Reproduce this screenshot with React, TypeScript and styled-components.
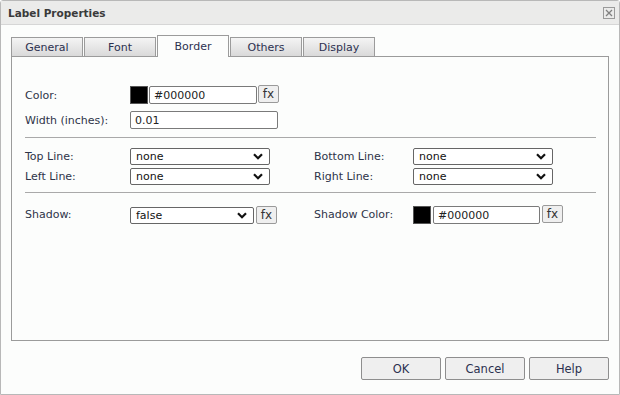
import React from 'react'
import styled, { createGlobalStyle } from 'styled-components'

const GlobalStyle = createGlobalStyle`
  html, body {
    margin: 0;
    padding: 0;
    background: #ffffff;
  }
  body {
    font-family: 'DejaVu Sans', Verdana, sans-serif;
    font-size: 11px;
    color: #333;
  }
`

const Dialog = styled.div`
  box-sizing: border-box;
  width: 620px;
  height: 395px;
  border: 1px solid #b8b8b8;
  border-radius: 3px 3px 0 0;
  background: #fcfdfc;
  display: flex;
  flex-direction: column;
`

const TitleBar = styled.div`
  box-sizing: border-box;
  height: 24px;
  background: #ebebea;
  border-bottom: 1px solid #d6d6d6;
  display: flex;
  align-items: center;
  justify-content: space-between;
  padding: 0 4px 0 7px;
`

const Title = styled.span`
  font-weight: bold;
  font-size: 10.5px;
  color: #3a3a3a;
`

const CloseBox = styled.div`
  box-sizing: border-box;
  width: 12px;
  height: 12px;
  border: 1px solid #9a9a9a;
  display: flex;
  align-items: center;
  justify-content: center;
  margin-top: 1px;
`

const Body = styled.div`
  padding: 10px 10px 0 10px;
  display: flex;
  flex-direction: column;
`

const TabRow = styled.div`
  display: flex;
  align-items: flex-end;
  gap: 1px;
  height: 21px;
`

const Tab = styled.div<{ $active?: boolean }>`
  box-sizing: border-box;
  width: 72px;
  height: ${p => (p.$active ? '22px' : '19px')};
  margin-bottom: ${p => (p.$active ? '-1px' : '0')};
  border: 1px solid #9b9b9b;
  border-bottom: none;
  background: ${p => (p.$active ? '#fcfdfc' : 'linear-gradient(#f4f4f4, #d9d9d9)')};
  position: relative;
  z-index: 1;
  display: flex;
  align-items: center;
  justify-content: center;
  color: #2c3150;
  padding-top: ${p => (p.$active ? '0' : '1px')};
`

const Panel = styled.div`
  box-sizing: border-box;
  height: 285px;
  border: 1px solid #9b9b9b;
  padding: 29px 12px 0 13px;
`

const Row = styled.div<{ $mt?: number }>`
  display: flex;
  align-items: center;
  height: 18px;
  margin-top: ${p => p.$mt ?? 0}px;
`

const Label = styled.span<{ $w?: number }>`
  width: ${p => p.$w ?? 105}px;
  flex: none;
  color: #2e3448;
  white-space: nowrap;
`

const Swatch = styled.div<{ $mt?: number }>`
  box-sizing: border-box;
  width: 18px;
  height: 18px;
  border: 1px solid #555;
  background: #000;
  flex: none;
  margin-top: ${p => p.$mt ?? 0}px;
`

const TextInput = styled.div<{ $w: number; $mt?: number }>`
  box-sizing: border-box;
  width: ${p => p.$w}px;
  height: 18px;
  border: 1px solid #7a7a7a;
  border-radius: 2px;
  background: #fff;
  padding-left: 4px;
  display: flex;
  align-items: center;
  color: #222;
  flex: none;
  margin-top: ${p => p.$mt ?? 0}px;
`

const FxButton = styled.div<{ $mt?: number }>`
  box-sizing: border-box;
  width: 21px;
  height: 18px;
  border: 1px solid #9a9a9a;
  border-radius: 2px;
  background: #efefef;
  display: flex;
  align-items: center;
  justify-content: center;
  font-size: 12px;
  color: #333;
  margin-top: ${p => p.$mt ?? -2}px;
  flex: none;
`

const SelectBox = styled.div<{ $w: number; $mt?: number }>`
  box-sizing: border-box;
  width: ${p => p.$w}px;
  height: 17px;
  border: 1px solid #666;
  border-radius: 2px;
  background: #fff;
  padding: 0 6px 0 5px;
  display: flex;
  align-items: center;
  justify-content: space-between;
  color: #111;
  flex: none;
  margin-top: ${p => p.$mt ?? 0}px;
`

const Separator = styled.div<{ $top: number; $bottom: number }>`
  height: 1px;
  background: #a9a9a9;
  margin: ${p => p.$top}px 0 ${p => p.$bottom}px 0;
`

const Grid = styled.div`
  display: grid;
  grid-template-columns: 289px 1fr;
  row-gap: 3px;
`

const GridRow = styled.div`
  display: flex;
  align-items: center;
  height: 17px;
`

const ShadowRow = styled.div`
  display: grid;
  grid-template-columns: 289px 1fr;
  height: 19px;
  align-items: end;
`

const Cell = styled.div<{ $gap: number }>`
  display: flex;
  align-items: center;
  gap: ${p => p.$gap}px;
`

const Footer = styled.div`
  display: flex;
  justify-content: flex-end;
  gap: 4px;
  padding: 16px 10px 0 0;
`

const Button = styled.div`
  box-sizing: border-box;
  width: 80px;
  height: 23px;
  border: 1px solid #8e8e8e;
  border-radius: 2px;
  background: #efefef;
  display: flex;
  align-items: center;
  justify-content: center;
  color: #2c3150;
  font-size: 11.5px;
`

const Chevron = () => (
  <svg width="10" height="7" viewBox="0 0 10 7">
    <polyline points="1,1.2 5,5.2 9,1.2" fill="none" stroke="#111" strokeWidth="2.2" />
  </svg>
)

const Select = ({ value, w, mt }: { value: string; w: number; mt?: number }) => (
  <SelectBox $w={w} $mt={mt}>
    <span>{value}</span>
    <Chevron />
  </SelectBox>
)

const tabs = ['General', 'Font', 'Border', 'Others', 'Display']

export default function App() {
  return (
    <>
      <GlobalStyle />
      <Dialog>
        <TitleBar>
          <Title>Label Properties</Title>
          <CloseBox>
            <svg width="8" height="8" viewBox="0 0 8 8">
              <path d="M1 1 L7 7 M7 1 L1 7" stroke="#808080" strokeWidth="1.3" />
            </svg>
          </CloseBox>
        </TitleBar>
        <Body>
          <TabRow>
            {tabs.map(t => (
              <Tab key={t} $active={t === 'Border'}>{t}</Tab>
            ))}
          </TabRow>
          <Panel>
            <Row>
              <Label>Color:</Label>
              <Cell $gap={1}>
                <Swatch />
                <TextInput $w={108}>#000000</TextInput>
                <FxButton>fx</FxButton>
              </Cell>
            </Row>
            <Row $mt={7}>
              <Label>Width (inches):</Label>
              <TextInput $w={148}>0.01</TextInput>
            </Row>
            <Separator $top={8} $bottom={10} />
            <Grid>
              <GridRow>
                <Label>Top Line:</Label>
                <Select value="none" w={140} />
              </GridRow>
              <GridRow>
                <Label $w={99}>Bottom Line:</Label>
                <Select value="none" w={140} />
              </GridRow>
              <GridRow>
                <Label>Left Line:</Label>
                <Select value="none" w={140} />
              </GridRow>
              <GridRow>
                <Label $w={99}>Right Line:</Label>
                <Select value="none" w={140} />
              </GridRow>
            </Grid>
            <Separator $top={7} $bottom={11} />
            <ShadowRow>
              <Cell $gap={2}>
                <Label $w={103}>Shadow:</Label>
                <Select value="false" w={124} mt={2} />
                <FxButton $mt={0}>fx</FxButton>
              </Cell>
              <Cell $gap={2}>
                <Label $w={97}>Shadow Color:</Label>
                <Swatch $mt={2} />
                <TextInput $w={107} $mt={2}>#000000</TextInput>
                <FxButton $mt={0}>fx</FxButton>
              </Cell>
            </ShadowRow>
          </Panel>
        </Body>
        <Footer>
          <Button>OK</Button>
          <Button>Cancel</Button>
          <Button>Help</Button>
        </Footer>
      </Dialog>
    </>
  )
}
